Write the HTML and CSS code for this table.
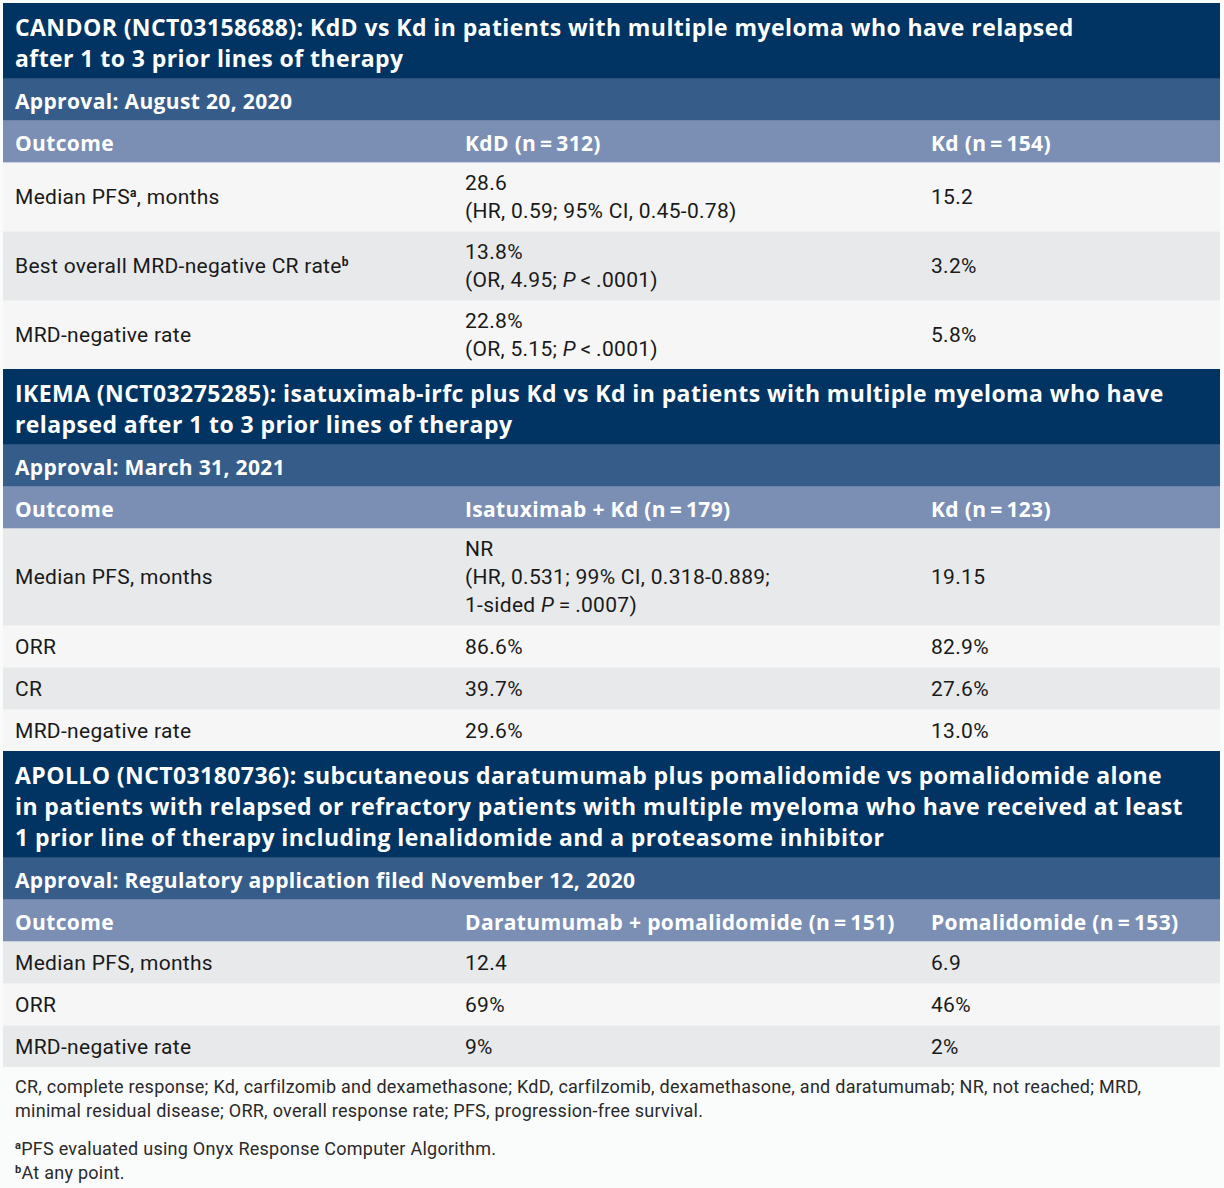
FILE: index.html
```html
<!DOCTYPE html>
<html lang="en">
<head>
<meta charset="utf-8">
<title>Trials</title>
<link rel="stylesheet" href="styles.css">
</head>
<body>
<table class="trials">
  <colgroup><col class="c1"><col class="c2"><col class="c3"></colgroup>
  <tbody>
    <tr class="title"><td colspan="3">CANDOR (NCT03158688): KdD vs Kd in patients with multiple myeloma who have relapsed<br>after 1 to 3 prior lines of therapy</td></tr>
    <tr class="approval"><td colspan="3">Approval: August 20, 2020</td></tr>
    <tr class="head"><td>Outcome</td><td>KdD (n&#8201;=&#8201;312)</td><td>Kd (n&#8201;=&#8201;154)</td></tr>
    <tr class="light"><td>Median PFS<sup>a</sup>, months</td><td>28.6<br>(HR, 0.59; 95% CI, 0.45-0.78)</td><td>15.2</td></tr>
    <tr class="gray"><td>Best overall MRD-negative CR rate<sup>b</sup></td><td>13.8%<br>(OR, 4.95; <i>P</i>&#8201;&lt;&#8201;.0001)</td><td>3.2%</td></tr>
    <tr class="light"><td>MRD-negative rate</td><td>22.8%<br>(OR, 5.15; <i>P</i>&#8201;&lt;&#8201;.0001)</td><td>5.8%</td></tr>

    <tr class="title"><td colspan="3">IKEMA (NCT03275285): isatuximab-irfc plus Kd vs Kd in patients with multiple myeloma who have<br>relapsed after 1 to 3 prior lines of therapy</td></tr>
    <tr class="approval"><td colspan="3">Approval: March 31, 2021</td></tr>
    <tr class="head"><td>Outcome</td><td>Isatuximab + Kd (n&#8201;=&#8201;179)</td><td>Kd (n&#8201;=&#8201;123)</td></tr>
    <tr class="gray"><td>Median PFS, months</td><td>NR<br>(HR, 0.531; 99% CI, 0.318-0.889;<br>1-sided <i>P</i>&#8201;=&#8201;.0007)</td><td>19.15</td></tr>
    <tr class="light"><td>ORR</td><td>86.6%</td><td>82.9%</td></tr>
    <tr class="gray"><td>CR</td><td>39.7%</td><td>27.6%</td></tr>
    <tr class="light"><td>MRD-negative rate</td><td>29.6%</td><td>13.0%</td></tr>

    <tr class="title"><td colspan="3">APOLLO (NCT03180736): subcutaneous daratumumab plus pomalidomide vs pomalidomide alone<br>in patients with relapsed or refractory patients with multiple myeloma who have received at least<br>1 prior line of therapy including lenalidomide and a proteasome inhibitor</td></tr>
    <tr class="approval"><td colspan="3">Approval: Regulatory application filed November 12, 2020</td></tr>
    <tr class="head"><td>Outcome</td><td>Daratumumab + pomalidomide (n&#8201;=&#8201;151)</td><td>Pomalidomide (n&#8201;=&#8201;153)</td></tr>
    <tr class="gray"><td>Median PFS, months</td><td>12.4</td><td>6.9</td></tr>
    <tr class="light"><td>ORR</td><td>69%</td><td>46%</td></tr>
    <tr class="gray"><td>MRD-negative rate</td><td>9%</td><td>2%</td></tr>
  </tbody>
</table>
<div class="notes">
  <p class="abbr">CR, complete response; Kd, carfilzomib and dexamethasone; KdD, carfilzomib, dexamethasone, and daratumumab; NR, not reached; MRD,<br>minimal residual disease; ORR, overall response rate; PFS, progression-free survival.</p>
  <p class="fn"><sup>a</sup>PFS evaluated using Onyx Response Computer Algorithm.<br><sup>b</sup>At any point.</p>
</div>
</body>
</html>
```

FILE: styles.css
```css
html, body {
  margin: 0;
  padding: 0;
  background: #fafbfb;
}
body {
  padding: 3px 4px 0 3px;
  font-family: "Roboto", "Liberation Sans", sans-serif;
  color: #1a1a1a;
}
.trials {
  width: 1217px;
  border-collapse: collapse;
  table-layout: fixed;
}
.c1 { width: 450px; }
.c2 { width: 466px; }
.c3 { width: 301px; }
.trials td {
  padding: 6px 12px;
  height: 29px;
  vertical-align: middle;
  font-size: 21px;
  line-height: 28px;
  letter-spacing: 0.3px;
}
.title td, .approval td, .head td {
  font-family: "Open Sans", "Liberation Sans", sans-serif;
  font-weight: 700;
  color: #fff;
  letter-spacing: 0.35px;
}
.title td {
  background: #013462;
  font-size: 23px;
  line-height: 31px;
  letter-spacing: 0.42px;
  padding: 9px 12px 4px;
  height: auto;
  border-bottom: 1px solid #2b4f7a;
}
.approval td {
  background: #365d8a;
  font-size: 21px;
  padding-top: 7px;
  padding-bottom: 5px;
  border-bottom: 1px solid #6d84ad;
}
.head td {
  background: #7b8fb5;
  font-size: 21px;
  padding-top: 7px;
  padding-bottom: 5px;
  border-bottom: 1px solid #c8d0de;
}
.light td { background: #f5f6f5; }
.gray td { background: #e8e9eb; }
.light + .gray td, .gray + .light td {
  border-top: 1px solid #f0f1f1;
}
sup {
  font-size: 12px;
  font-weight: 700;
  line-height: 0;
  vertical-align: 7px;
}
.notes {
  padding: 0 12px;
  font-size: 18px;
  line-height: 24px;
  color: #2a2a2a;
  letter-spacing: 0.26px;
}
.notes p { margin: 0; }
.abbr { padding-top: 8px; }
.fn { padding-top: 14px; }
.fn sup { font-size: 11px; vertical-align: 6px; }
```
